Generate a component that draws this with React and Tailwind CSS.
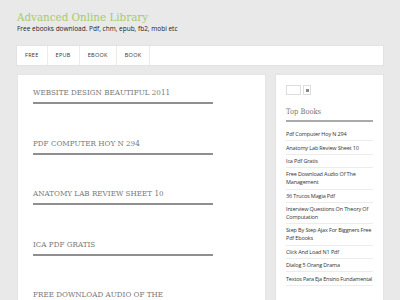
export default function App() {
  const posts = [
    "WEBSITE DESIGN BEAUTIFUL 2011",
    "PDF COMPUTER HOY N 294",
    "ANATOMY LAB REVIEW SHEET 10",
    "ICA PDF GRATIS",
    "FREE DOWNLOAD AUDIO OF THE",
  ];
  const books = [
    ["Pdf Computer Hoy N 294", false],
    ["Anatomy Lab Review Sheet 10", false],
    ["Ica Pdf Gratis", false],
    ["Free Download Audio Of The Management", false],
    ["36 Trucos Magia Pdf", false],
    ["Interview Questions On Theory Of Computation", false],
    ["Step By Step Ajax For Biggners Free Pdf Ebooks", false],
    ["Click And Load N1 Pdf", false],
    ["Dialog 5 Orang Drama", false],
    ["Textos Para Eja Ensino Fundamental", true],
  ];
  const slab = { fontFamily: '"DejaVu Serif Condensed", "DejaVu Serif", serif' };
  const sans = { fontFamily: '"Open Sans", "Noto Sans", sans-serif' };
  return (
    <div className="w-[400px] h-[300px] overflow-hidden bg-[#e9e9e9]" style={sans}>
      <div className="pl-[17px] pt-[10px]">
        <div
          className="text-[11.5px] leading-[14px] text-[#a6cb6c] font-normal font-stretch-condensed"
          style={slab}
        >
          Advanced Online Library
        </div>
        <div className="text-[6.5px] leading-[9px] text-[#222] mt-[0px]">
          Free ebooks download. Pdf, chm, epub, fb2, mobi etc
        </div>
      </div>
      <div className="mx-[16px] mt-[12px] h-[21px] bg-white border border-[#e2e2e2] flex items-stretch">
        {["FREE", "EPUB", "EBOOK", "BOOK"].map((n) => (
          <div
            key={n}
            className="px-[8px] flex items-center text-[5.5px] tracking-[0.3px] text-[#333] border-r border-[#ececec]"
          >
            {n}
          </div>
        ))}
      </div>
      <div className="flex mt-[8px] pl-[17px] gap-[9px]">
        <div className="w-[249px] h-[240px] bg-white border border-[#e4e4e4] pl-[15px] pt-[12px]">
          {posts.map((p) => (
            <div key={p} className="w-[180px] mb-[33.5px]">
              <div
                className="text-[8px] leading-[12px] text-[#7a7a7a] whitespace-nowrap font-stretch-condensed"
                style={slab}
              >
                {p}
              </div>
              <div className="h-[2px] bg-[#8f8f8f] mt-[3px]" />
            </div>
          ))}
        </div>
        <div className="w-[109px] h-[240px] bg-white border border-[#e4e4e4] px-[10px] pt-[10px]">
          <div className="flex items-center gap-[2px]">
            <div className="w-[15px] h-[10px] border border-[#ddd] bg-white" />
            <div className="w-[8px] h-[10px] border border-[#ddd] flex items-center justify-center">
              <div className="w-[3px] h-[3px] bg-[#888]" />
            </div>
          </div>
          <div
            className="mt-[12px] text-[7.5px] leading-[10px] text-[#777] font-stretch-condensed"
            style={slab}
          >
            Top Books
          </div>
          <div className="h-[2px] bg-[#aaa] mt-[3px]" />
          <div className="mt-[6px]">
            {books.map(([b, nowrap]) => (
              <div
                key={b}
                className={
                  nowrap
                    ? "whitespace-nowrap text-[5.5px] leading-[8px] tracking-[-0.2px] text-[#333] py-[2.2px] border-b border-[#ececec]"
                    : "text-[5.5px] leading-[8px] tracking-[-0.15px] text-[#333] py-[2.2px] border-b border-[#ececec]"
                }
              >
                {b}
              </div>
            ))}
          </div>
        </div>
      </div>
    </div>
  );
}
